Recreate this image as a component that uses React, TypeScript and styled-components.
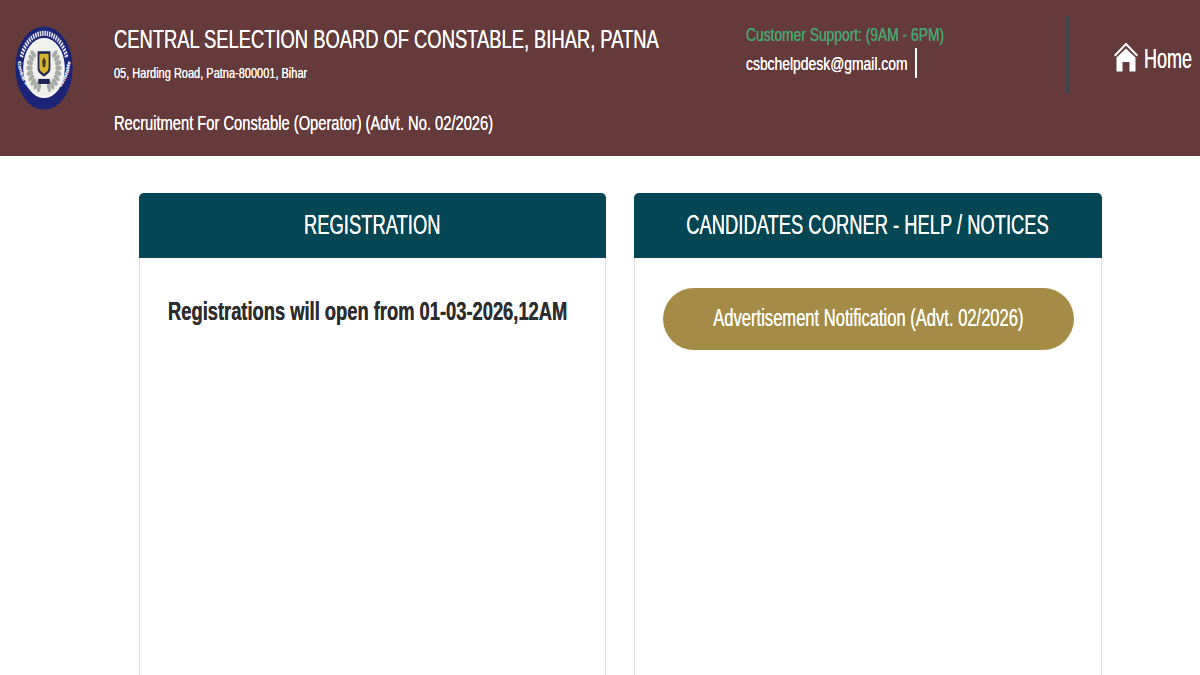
import React from 'react'
import styled, { createGlobalStyle } from 'styled-components'

const GlobalStyle = createGlobalStyle`
  html, body {
    margin: 0;
    padding: 0;
    height: 675px;
    overflow: hidden;
    background: #fff;
    font-family: 'Liberation Sans', Arial, sans-serif;
    text-shadow: 0 0 0.4px currentColor;
  }
`

const Header = styled.header`
  display: flex;
  height: 156px;
  background: #653a3a;
  color: #fff;
`

const LogoCell = styled.div`
  width: 114px;
  flex: none;
  padding: 26px 0 0 15px;
  box-sizing: border-box;
`

const OrgCell = styled.div`
  width: 632px;
  flex: none;
  padding-top: 24px;
  box-sizing: border-box;
`

// The source page is squeezed horizontally, so text is narrowed from its left edge
const Squeezed = styled.span<{ $x: number }>`
  display: block;
  white-space: nowrap;
  transform: scaleX(${p => p.$x});
  transform-origin: left center;
`

const OrgTitle = styled(Squeezed)`
  font-size: 25px;
  line-height: 30px;
`

const OrgAddress = styled(Squeezed)`
  margin-top: 10px;
  font-size: 15px;
  line-height: 18px;
`

const Advert = styled(Squeezed)`
  margin-top: 29px;
  font-size: 20px;
  line-height: 24px;
`

const SupportCell = styled.div`
  width: 320px;
  flex: none;
  padding-top: 24px;
  box-sizing: border-box;
`

const SupportLabel = styled(Squeezed)`
  font-size: 19px;
  line-height: 22px;
  color: #45a872;
`

const MailRow = styled.div`
  display: flex;
  align-items: center;
  height: 30px;
  margin-top: 2px;
`

const MailText = styled(Squeezed)`
  width: 169px;
  margin-top: 2px;
  font-size: 18px;
  line-height: 30px;
`

const Cursor = styled.i`
  display: block;
  width: 2px;
  height: 30px;
  background: #fff;
`

const Divider = styled.div`
  flex: none;
  width: 3px;
  height: 77px;
  margin-top: 16px;
  background: #3f4448;
`

const HomeLink = styled.a`
  display: flex;
  align-items: center;
  gap: 6px;
  height: 30px;
  margin: 42px 0 0 45px;
  color: #fff;
`

const HomeText = styled(Squeezed)`
  width: 48px;
  margin-top: 4px;
  font-size: 27px;
  line-height: 30px;
`

const Main = styled.main`
  display: flex;
  gap: 28px;
  padding: 37px 0 0 139px;
`

const Card = styled.section<{ $w: number }>`
  width: ${p => p.$w}px;
  height: 482px;
  flex: none;
  box-sizing: border-box;
  border: 1px solid #dfe3e6;
  border-top: 0;
  border-bottom: 0;
  border-radius: 5px 5px 0 0;
`

const CardHead = styled.div`
  display: flex;
  justify-content: center;
  align-items: center;
  height: 65px;
  margin: 0 -1px;
  border-radius: 5px 5px 0 0;
  background: #044653;
  color: #fff;
`

const CardTitle = styled.span`
  display: block;
  white-space: nowrap;
  font-size: 27px;
  transform: scaleX(0.68);
`

const CardBody = styled.div`
  padding: 30px 28px;
`

const Notice = styled(Squeezed)`
  width: 399px;
  font-size: 26px;
  line-height: 46px;
  font-weight: 700;
  color: #2d2d2d;
`

const NoticeButton = styled.a`
  display: flex;
  justify-content: center;
  align-items: center;
  box-sizing: border-box;
  width: 411px;
  height: 62px;
  padding-bottom: 2px;
  border-radius: 31px;
  background: #a48c47;
  color: #fff;
`

const ButtonText = styled.span`
  display: block;
  white-space: nowrap;
  font-size: 23px;
  transform: scaleX(0.72);
`

const LEAF_ANGLES = [48, 62, 76, 90, 104, 118, 132, 146, 160]

const Seal = () => (
  <svg width="58" height="84" viewBox="0 0 100 100" preserveAspectRatio="none" role="img">
    <defs>
      <path id="seal-bottom" d="M5 44 A45.5 45.5 0 0 0 95 44" />
    </defs>
    <circle cx="50" cy="50" r="49.5" fill="#1c2477" />
    <path d="M11 37 A41 41 0 0 1 89 37" fill="none" stroke="#e4e4ee" strokeWidth="6" strokeDasharray="2.5 1.5" />
    <text fill="#f2f2f6" fontSize="7.5" fontWeight="700" textAnchor="middle">
      <textPath href="#seal-bottom" startOffset="50%">Central Selection Board of Constable</textPath>
    </text>
    <circle cx="50" cy="50" r="35" fill="#f0f0ed" stroke="#fff" strokeWidth="1.5" />
    {LEAF_ANGLES.map(a => (
      <g key={a} fill="#a8aaa5">
        <ellipse cx="50" cy="25" rx="3" ry="5.5" transform={`rotate(${a} 50 50)`} />
        <ellipse cx="50" cy="25" rx="3" ry="5.5" transform={`rotate(${-a} 50 50)`} />
      </g>
    ))}
    <path d="M39 30h22v21c0 4-6 7-11 9-5-2-11-5-11-9z" fill="#1b2353" />
    <path d="M42 33h16v17c0 3-4 5-8 7-4-2-8-4-8-7z" fill="#d6b52c" />
    <path d="M50 37l3 5-1 7h-4l-1-7z" fill="#3a3a2c" />
    <rect x="40" y="63" width="20" height="6" fill="#1b2353" />
  </svg>
)

const HomeIcon = () => (
  <svg width="24" height="30" viewBox="0 0 24 30" aria-hidden="true">
    <path d="M12 0.5 L24 13 L22.6 14.5 L12 3.6 L1.4 14.5 L0 13 Z" fill="#fff" />
    <path d="M12 6.5 L21.5 15.5 V29.5 H15.5 V20 H8.5 V29.5 H2.5 V15.5 Z" fill="#fff" />
  </svg>
)

const App = () => (
  <>
    <GlobalStyle />
    <Header>
      <LogoCell>
        <Seal />
      </LogoCell>
      <OrgCell>
        <OrgTitle $x={0.734}>CENTRAL SELECTION BOARD OF CONSTABLE, BIHAR, PATNA</OrgTitle>
        <OrgAddress $x={0.733}>05, Harding Road, Patna-800001, Bihar</OrgAddress>
        <Advert $x={0.735}>Recruitment For Constable (Operator) (Advt. No. 02/2026)</Advert>
      </OrgCell>
      <SupportCell>
        <SupportLabel $x={0.727}>Customer Support: (9AM - 6PM)</SupportLabel>
        <MailRow>
          <MailText $x={0.772}>csbchelpdesk@gmail.com</MailText>
          <Cursor />
        </MailRow>
      </SupportCell>
      <Divider />
      <HomeLink>
        <HomeIcon />
        <HomeText $x={0.667}>Home</HomeText>
      </HomeLink>
    </Header>
    <Main>
      <Card $w={467}>
        <CardHead>
          <CardTitle>REGISTRATION</CardTitle>
        </CardHead>
        <CardBody>
          <Notice $x={0.705}>Registrations will open from 01-03-2026,12AM</Notice>
        </CardBody>
      </Card>
      <Card $w={468}>
        <CardHead>
          <CardTitle>CANDIDATES CORNER - HELP / NOTICES</CardTitle>
        </CardHead>
        <CardBody>
          <NoticeButton>
            <ButtonText>Advertisement Notification (Advt. 02/2026)</ButtonText>
          </NoticeButton>
        </CardBody>
      </Card>
    </Main>
  </>
)

export default App
